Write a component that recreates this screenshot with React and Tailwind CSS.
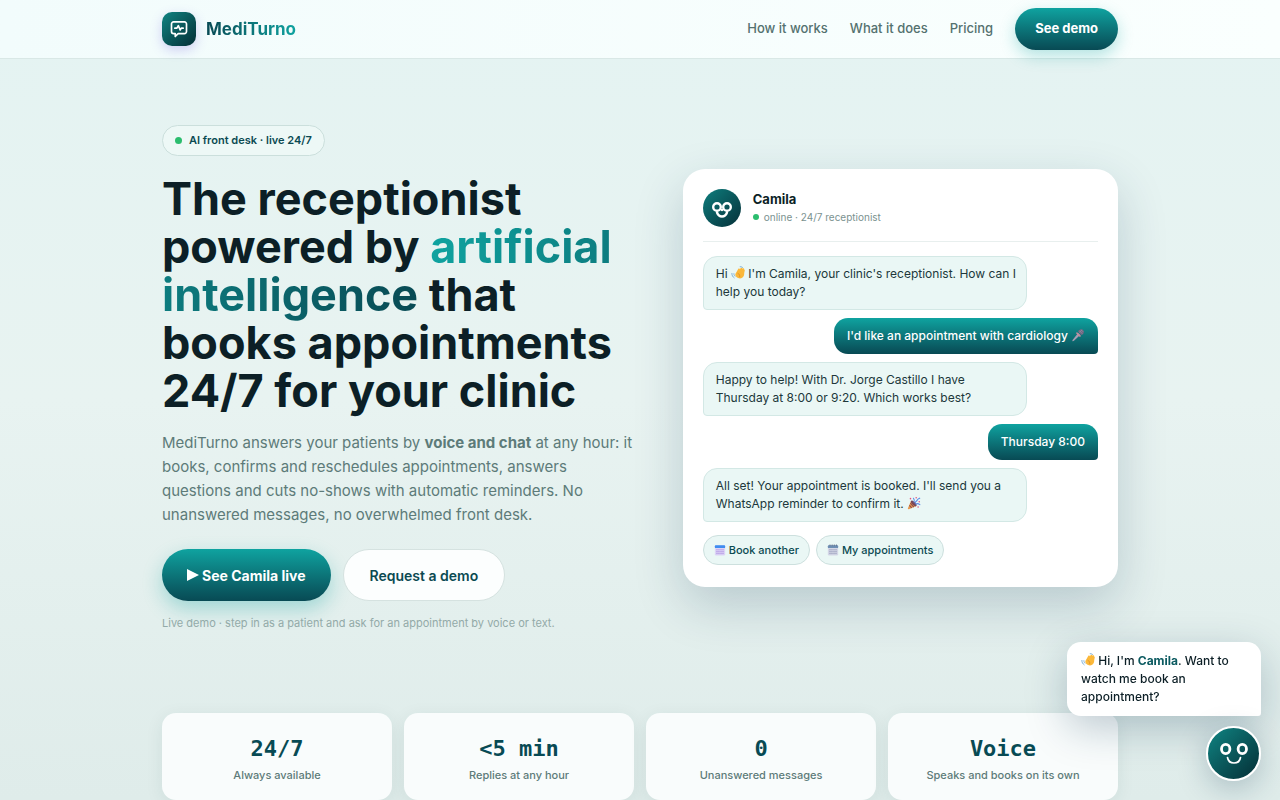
import React from 'react';

const links = ['How it works', 'What it does', 'Pricing'];

const stats = [
  { value: '24/7', label: 'Always available' },
  { value: '<5 min', label: 'Replies at any hour' },
  { value: '0', label: 'Unanswered messages' },
  { value: 'Voice', label: 'Speaks and books on its own' },
];

const WaveIcon = () => (
  <svg viewBox="0 0 16 16" className="inline-block h-[14px] w-[14px] align-[-2px]" aria-hidden="true">
    <path
      d="M5 9 8.400 3.200c.6-.8 1.800-.3 1.600.6l1.300-1.500c.7-.6 1.800 0 1.500.9l.9-.6c.8-.3 1.500.4 1.200 1.200l.3.200c.5.200.7.8.5 1.300-.9 2.200-.3 4.300-1.200 6.200-1.100 2.500-4 3.500-6.400 2.300C5.800 12.700 4.600 10.900 5 9z"
      fill="#fbb83a"
    />
    <path d="M8 8.400c1.500.7 2.400 2.200 2 3.900" stroke="#e08a1e" strokeWidth="0.9" fill="none" strokeLinecap="round" />
    <path d="M1 8.500c0 2.200.8 3.800 2.600 5M3.300 8.800c0 1.200.4 2 1.200 2.800M10.500.8c1.200 0 2 .2 2.700.8" stroke="#6fa8d6" strokeWidth="1" fill="none" strokeLinecap="round" />
  </svg>
);

const MicIcon = () => (
  <svg viewBox="0 0 16 16" className="inline-block h-[14px] w-[14px] align-[-2px]" aria-hidden="true">
    <path d="M8.200 5.800 10.500 8 3 14.800l-1.500.4.3-1.600z" fill="#a79db4" />
    <path d="M6.700 4.600 11.600 9.200l-1.500 1L5.800 6z" fill="#c98a9b" />
    <path d="M8 3.900c.8-2 3-3.200 5-2.200 2.100 1.100 2.300 3.700.8 5.200-.7.7-1.500 1-2.300 1.200z" fill="#6d6880" />
    <path d="m9.700 3.200 3.500 3.300M11.500 2l2.500 2.500M9.300 5.200l3.500-3.300" stroke="#9d97b3" strokeWidth="0.6" />
  </svg>
);

const PartyIcon = () => (
  <svg viewBox="0 0 16 16" className="inline-block h-[14px] w-[14px] align-[-2px]" aria-hidden="true">
    <path d="m4.700 5.500 6 6L2.200 15c-.8.3-1.400-.3-1.200-1.100z" fill="#e8974a" />
    <path d="m3.800 8 4 4.800M2.800 10.700l2.600 3" stroke="#8a4a52" strokeWidth="1.200" />
    <ellipse cx="7.700" cy="8.500" rx="1.900" ry="4.200" transform="rotate(-45 7.700 8.500)" fill="#7a4556" />
    <path d="M8 6.800c1-1.400.2-3-.6-4.200M9.300 8c.2-2.200 2-1.800 2.400-3.300S13.500 3 14.500 2.500M10.200 9.200c1.500-1 3-.6 4.500.6" stroke="#5b8de8" strokeWidth="1.300" fill="none" strokeLinecap="round" />
    <g fill="#e5527c">
      <circle cx="4" cy="3" r="0.900" />
      <circle cx="10.500" cy="2" r="0.900" />
      <circle cx="14" cy="6.500" r="0.900" />
      <circle cx="12.700" cy="12.500" r="0.900" />
    </g>
  </svg>
);

const CalendarIcon = ({ spiral }) => (
  <svg viewBox="0 0 14 14" className="h-3 w-3 shrink-0" aria-hidden="true">
    <rect x="1" y="1.500" width="12" height="12" rx="1.500" fill={spiral ? '#d3d6e6' : '#dcd3f6'} />
    <rect x="1" y="1.500" width="12" height="3.200" rx="1" fill={spiral ? '#6d8fb4' : '#3f8df0'} />
    {spiral && <path d="M3.500.5v2M6 .5v2M8.500.5v2M11 .5v2" stroke="#4f6279" strokeWidth="0.800" />}
    <path
      d="M3.500 6v6M5.800 6v6M8.200 6v6M10.500 6v6"
      stroke={spiral ? '#8a8fb0' : '#a583dd'}
      strokeWidth="1.100"
      strokeDasharray="1.400 0.800"
    />
  </svg>
);

const Logo = () => (
  <span className="flex h-[34px] w-[34px] items-center justify-center rounded-[10px] bg-linear-to-br from-[#0f8583] to-[#052f36] shadow-[0_4px_12px_rgba(110,90,220,0.28)]">
    <svg viewBox="0 0 24 24" className="h-5 w-5" fill="none" stroke="#fff" strokeWidth="2" strokeLinecap="round" strokeLinejoin="round" aria-hidden="true">
      <path d="M5.500 3.500h13a2.500 2.500 0 0 1 2.500 2.500v9a2.500 2.500 0 0 1-2.500 2.500H11L7.500 21v-3.500h-2A2.500 2.500 0 0 1 3 15V6a2.500 2.500 0 0 1 2.500-2.500z" />
      <path d="M7 11h2.500l1.700-3 2.200 5.200 1.300-2.200H17" />
    </svg>
  </span>
);

const SmallFace = () => (
  <span className="flex h-[38px] w-[38px] shrink-0 items-center justify-center rounded-full bg-linear-to-br from-[#0d7f7e] to-[#06313a]">
    <svg viewBox="0 0 22 18" className="mt-1 h-[18px] w-[22px]" fill="none" stroke="#fff" aria-hidden="true">
      <circle cx="6" cy="6" r="3.800" strokeWidth="2.400" />
      <circle cx="16" cy="6" r="3.800" strokeWidth="2.400" />
      <path d="M6 11.500c1 2.700 2.800 4 5 4s4-1.300 5-4" strokeWidth="2.400" strokeLinecap="round" />
      <path d="M9.500 8.500h3l-1.500 1.600z" fill="#fff" strokeWidth="1" />
    </svg>
  </span>
);

const Face = () => (
  <svg viewBox="0 0 30 24" className="h-6 w-[30px]" fill="none" stroke="#fff" aria-hidden="true">
    <ellipse cx="6.700" cy="7" rx="4.200" ry="4.600" strokeWidth="2.800" />
    <ellipse cx="23.300" cy="7" rx="4.200" ry="4.600" strokeWidth="2.800" />
    <path d="M8.500 15.500c.5 3.300 3 5.500 6.500 5.500s6-2.200 6.500-5.500" strokeWidth="1.700" strokeLinecap="round" />
  </svg>
);

const BotMessage = ({ children }) => (
  <p className="w-[82%] rounded-[14px] rounded-bl-[4px] border border-[#d3e8e5] bg-[#eaf7f5] py-2 pr-2 pl-3 text-[12px] leading-[18px] text-[#20373b]">
    {children}
  </p>
);

const UserMessage = ({ children }) => (
  <p className="self-end rounded-[14px] rounded-br-[4px] bg-linear-to-b from-[#0fa3a0] to-[#084a54] px-[13px] py-[9px] text-[12px] leading-[18px] font-medium text-white">
    {children}
  </p>
);

const chip = 'flex h-[30px] items-center gap-[3px] rounded-full border border-[#cde0de] bg-[#eaf7f5] px-[10px] text-[11px] font-medium text-[#0b4a52]';

const App = () => {
  return (
    <div className="min-h-screen bg-linear-to-b from-[#e4f3f2] via-[#e8f3f1] to-[#dfecea] font-['Inter',sans-serif] text-[#0c1f26]">
      <header className="border-b border-[#d9e8e6] bg-linear-to-r from-[#f2fcfc] to-[#fafffe]">
        <div className="mx-auto flex h-[58px] max-w-[1000px] items-center justify-between px-[22px]">
          <a href="#top" className="flex items-center gap-[10px]">
            <Logo />
            <span className="bg-linear-to-r from-[#084a54] to-[#0fa3a0] bg-clip-text text-[17px] leading-6 font-bold text-transparent">
              MediTurno
            </span>
          </a>
          <nav className="flex items-center gap-[22px] text-[13px] font-medium text-[#54716f]">
            {links.map((link) => (
              <a key={link} href="#top">{link}</a>
            ))}
            <button className="h-[42px] rounded-full bg-linear-to-b from-[#0fa3a0] to-[#084a54] px-5 text-[13px] font-bold text-white shadow-[0_6px_16px_rgba(15,163,160,0.3)]">
              See demo
            </button>
          </nav>
        </div>
      </header>

      <main className="mx-auto max-w-[1000px] px-[22px] pt-[66px]">
        <section className="grid grid-cols-[1.1fr_1fr] items-center gap-[42px]">
          <div>
            <span className="inline-flex h-[31px] items-center gap-[7px] rounded-full border border-[#cbdfdc] bg-[#edf8f6] px-3 text-[11px] font-semibold text-[#0b4a52]">
              <span className="h-[7px] w-[7px] rounded-full bg-[#2bbd6e]" />
              AI front desk · live 24/7
            </span>
            <h1 className="mt-[19px] text-[45px] leading-[48px] font-bold">
              The receptionist powered by{' '}
              <span className="bg-linear-to-r from-[#0fa3a0] to-[#084a54] bg-clip-text text-transparent">
                artificial intelligence
              </span>{' '}
              that books appointments 24/7 for your clinic
            </h1>
            <p className="mt-4 pr-2 text-[15px] leading-6 text-[#5d7b79]">
              MediTurno answers your patients by <strong className="font-bold">voice and chat</strong> at any hour: it
              books, confirms and reschedules appointments, answers questions and cuts no-shows with automatic
              reminders. No unanswered messages, no overwhelmed front desk.
            </p>
            <div className="mt-[22px] flex gap-3">
              <button className="flex h-[52px] items-center gap-[3px] rounded-full bg-linear-to-b from-[#0fa3a0] to-[#084a54] px-[25px] text-[14px] font-bold text-white shadow-[0_8px_20px_rgba(15,163,160,0.32)]">
                <svg viewBox="0 0 12 12" className="h-3 w-3" fill="currentColor" aria-hidden="true">
                  <path d="M0 0l12 6-12 6z" />
                </svg>
                See Camila live
              </button>
              <button className="h-[52px] rounded-full border border-[#d5e2e0] bg-[#fcfefe] px-[26px] text-[14px] font-semibold text-[#0b4a52]">
                Request a demo
              </button>
            </div>
            <p className="mt-[14px] text-[11px] leading-4 text-[#93aaa8]">
              Live demo · step in as a patient and ask for an appointment by voice or text.
            </p>
          </div>

          <div className="rounded-[22px] bg-white px-5 pt-5 pb-[22px] shadow-[0_18px_50px_rgba(10,50,80,0.2)]">
            <div className="flex items-center gap-3 border-b border-[#e8efee] pb-[14px]">
              <SmallFace />
              <div>
                <p className="text-[13px] leading-[18px] font-bold">Camila</p>
                <p className="flex items-center gap-[5px] text-[10px] leading-[18px] text-[#7b9290]">
                  <span className="h-[6px] w-[6px] rounded-full bg-[#2bbd6e]" />
                  online · 24/7 receptionist
                </p>
              </div>
            </div>
            <div className="mt-[14px] flex flex-col gap-2">
              <BotMessage>
                Hi <WaveIcon /> I'm Camila, your clinic's receptionist. How can I help you today?
              </BotMessage>
              <UserMessage>
                I'd like an appointment with cardiology <MicIcon />
              </UserMessage>
              <BotMessage>Happy to help! With Dr. Jorge Castillo I have Thursday at 8:00 or 9:20. Which works best?</BotMessage>
              <UserMessage>Thursday 8:00</UserMessage>
              <BotMessage>
                All set! Your appointment is booked. I'll send you a WhatsApp reminder to confirm it. <PartyIcon />
              </BotMessage>
            </div>
            <div className="mt-[13px] flex gap-[6px]">
              <button className={chip}>
                <CalendarIcon />
                Book another
              </button>
              <button className={chip}>
                <CalendarIcon spiral />
                My appointments
              </button>
            </div>
          </div>
        </section>

        <section className="mt-[82px] grid grid-cols-4 gap-3">
          {stats.map((stat) => (
            <div key={stat.label} className="rounded-[14px] bg-[#f9fcfc] pt-[22px] pb-[17px] text-center shadow-[0_4px_18px_rgba(10,60,70,0.08)]">
              <p className="font-['DejaVu_Sans_Mono',monospace] text-[22px] leading-7 font-bold text-[#084a54]">
                {stat.value}
              </p>
              <p className="mt-1 text-[11px] leading-4 font-medium text-[#5d7b79]">{stat.label}</p>
            </div>
          ))}
        </section>
      </main>

      <aside className="fixed right-[19px] bottom-[19px] flex flex-col items-end gap-[10px]">
        <p className="w-[194px] rounded-[14px] rounded-br-[3px] bg-white px-[14px] py-[10px] text-[12px] leading-[18px] font-medium shadow-[0_12px_40px_rgba(10,50,80,0.25)]">
          <WaveIcon /> Hi, I'm <strong className="font-bold text-[#0b5a60]">Camila</strong>. Want to watch me book an
          appointment?
        </p>
        <button
          aria-label="Chat with Camila"
          className="flex h-[55px] w-[55px] items-center justify-center rounded-full border-2 border-white bg-linear-to-br from-[#0f8583] to-[#052f36] shadow-[0_8px_30px_rgba(10,50,80,0.25)]"
        >
          <Face />
        </button>
      </aside>
    </div>
  );
};

export default App;
